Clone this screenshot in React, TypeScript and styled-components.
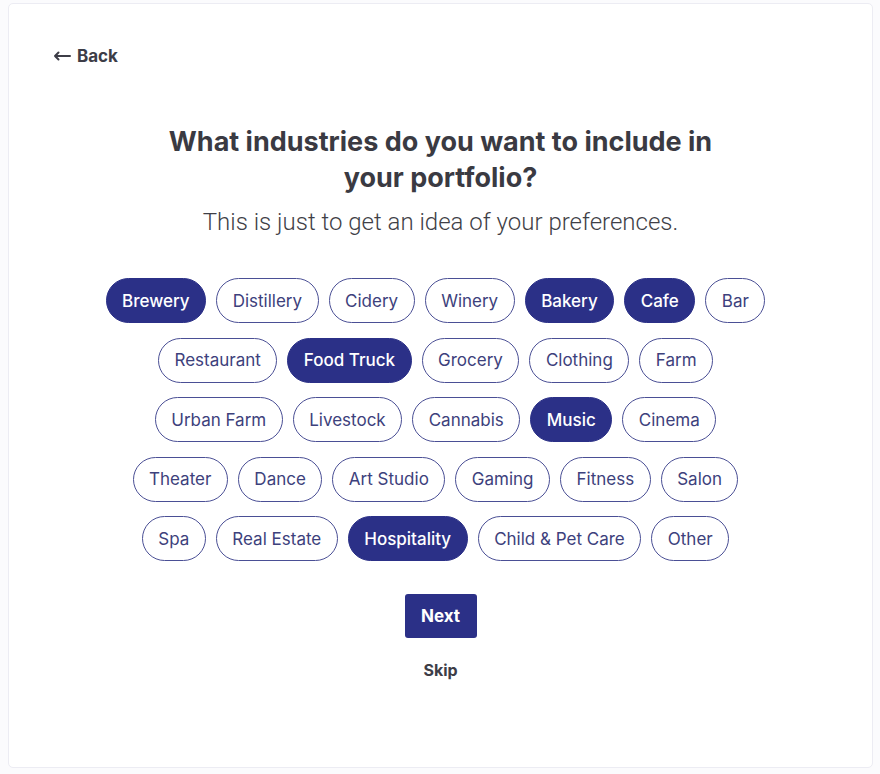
import React from 'react';
import styled, { createGlobalStyle } from 'styled-components';

const GlobalStyle = createGlobalStyle`
  html, body {
    margin: 0;
    padding: 0;
    background: #fbfbfd;
    font-family: Inter, "Liberation Sans", sans-serif;
  }
`;

const Page = styled.div`
  padding: 3px 7px 6px 8px;
  box-sizing: border-box;
  height: 774px;
`;

const Card = styled.div`
  height: 100%;
  box-sizing: border-box;
  background: #ffffff;
  border: 1px solid #ececf3;
  border-radius: 5px;
  padding: 42px 44px 0;
  display: flex;
  flex-direction: column;
`;

const BackLink = styled.a`
  align-self: flex-start;
  display: flex;
  align-items: center;
  gap: 6px;
  font-size: 17px;
  font-weight: 700;
  color: #3d3d47;
  text-decoration: none;
  cursor: pointer;
`;

const Content = styled.div`
  display: flex;
  flex-direction: column;
  align-items: center;
  margin-top: 58px;
`;

const Heading = styled.h1`
  margin: 0;
  max-width: 580px;
  text-align: center;
  font-size: 27px;
  line-height: 36px;
  font-weight: 700;
  color: #3a3a42;
`;

const Subtitle = styled.p`
  margin: 12px 0 0;
  font-family: Roboto, "Liberation Sans", sans-serif;
  font-size: 24px;
  font-weight: 300;
  color: #3f3f47;
`;

const ChipRows = styled.div`
  display: flex;
  flex-direction: column;
  align-items: center;
  gap: 14.5px;
  margin-top: 42px;
`;

const ChipRow = styled.div`
  display: flex;
`;

const Chip = styled.button<{ $selected?: boolean }>`
  height: 45px;
  margin-right: 10px;
  padding: 0 15.5px;
  border-radius: 23px;
  border: 1px solid ${(p) => (p.$selected ? '#2b3087' : '#4a4f95')};
  background: ${(p) => (p.$selected ? '#2b3087' : '#ffffff')};
  color: ${(p) => (p.$selected ? '#ffffff' : '#3d417c')};
  font-family: Inter, "Liberation Sans", sans-serif;
  font-size: 17px;
  font-weight: ${(p) => (p.$selected ? 500 : 400)};
  cursor: pointer;
  white-space: nowrap;
`;

const NextButton = styled.button`
  margin-top: 33px;
  width: 72px;
  height: 44px;
  border: none;
  border-radius: 3px;
  background: #2b3087;
  color: #ffffff;
  font-family: Inter, "Liberation Sans", sans-serif;
  font-size: 17px;
  font-weight: 700;
  cursor: pointer;
`;

const SkipLink = styled.a`
  margin-top: 22px;
  font-size: 16px;
  font-weight: 700;
  color: #3d3d47;
  cursor: pointer;
`;

const rows: { label: string; selected?: boolean }[][] = [
  [
    { label: 'Brewery', selected: true },
    { label: 'Distillery' },
    { label: 'Cidery' },
    { label: 'Winery' },
    { label: 'Bakery', selected: true },
    { label: 'Cafe', selected: true },
    { label: 'Bar' },
  ],
  [
    { label: 'Restaurant' },
    { label: 'Food Truck', selected: true },
    { label: 'Grocery' },
    { label: 'Clothing' },
    { label: 'Farm' },
  ],
  [
    { label: 'Urban Farm' },
    { label: 'Livestock' },
    { label: 'Cannabis' },
    { label: 'Music', selected: true },
    { label: 'Cinema' },
  ],
  [
    { label: 'Theater' },
    { label: 'Dance' },
    { label: 'Art Studio' },
    { label: 'Gaming' },
    { label: 'Fitness' },
    { label: 'Salon' },
  ],
  [
    { label: 'Spa' },
    { label: 'Real Estate' },
    { label: 'Hospitality', selected: true },
    { label: 'Child & Pet Care' },
    { label: 'Other' },
  ],
];

const ArrowLeft = () => (
  <svg width="18" height="10" viewBox="0 0 18 10" fill="none">
    <path d="M17 5H2M5.5 1.5L2 5l3.5 3.5" stroke="#3d3d47" strokeWidth="2" strokeLinecap="round" strokeLinejoin="round" />
  </svg>
);

const App = () => {
  const [picked, setPicked] = React.useState(rows.map((r) => r.map((c) => !!c.selected)));

  const toggle = (ri: number, ci: number) => {
    setPicked((prev) => prev.map((r, i) => (i === ri ? r.map((v, j) => (j === ci ? !v : v)) : r)));
  };

  return (
    <Page>
      <GlobalStyle />
      <Card>
        <BackLink>
          <ArrowLeft />
          Back
        </BackLink>
        <Content>
          <Heading>What industries do you want to include in your portfolio?</Heading>
          <Subtitle>This is just to get an idea of your preferences.</Subtitle>
          <ChipRows>
            {rows.map((row, ri) => (
              <ChipRow key={ri}>
                {row.map((chip, ci) => (
                  <Chip key={chip.label} $selected={picked[ri][ci]} onClick={() => toggle(ri, ci)}>
                    {chip.label}
                  </Chip>
                ))}
              </ChipRow>
            ))}
          </ChipRows>
          <NextButton>Next</NextButton>
          <SkipLink>Skip</SkipLink>
        </Content>
      </Card>
    </Page>
  );
};

export default App;
